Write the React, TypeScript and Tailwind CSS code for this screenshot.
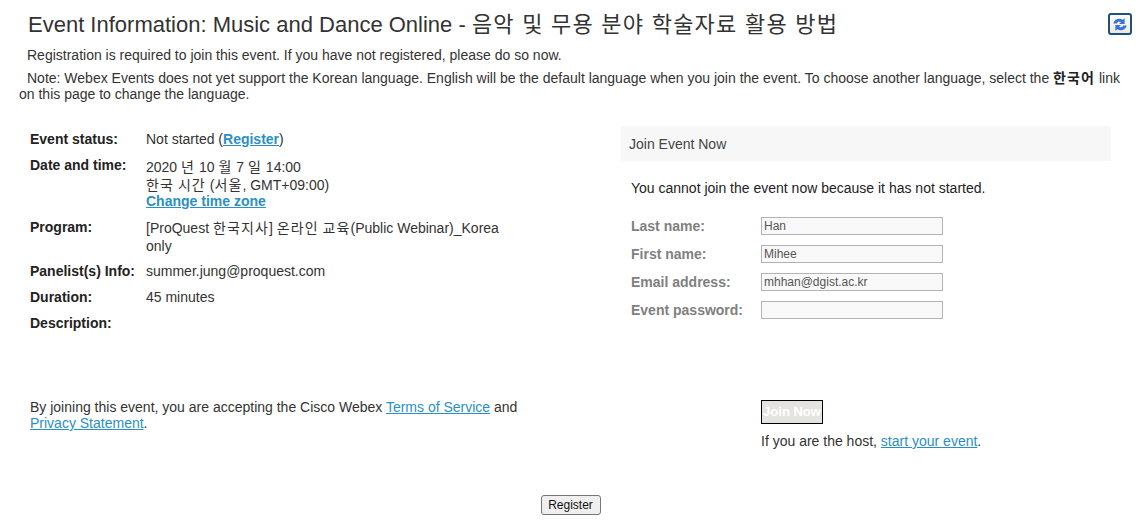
const font = "[font-family:'Liberation_Sans','Noto_Sans_CJK_KR',sans-serif]";

// Korean glyphs run wider in the reference than Noto does, so words get a bit of tracking
function Ko({ children }: { children: string }) {
  return <span className="tracking-[0.079em]">{children}</span>;
}

const linkClass = "text-[#2a90c4] underline";

const eventRows = [
  { label: "Event status:", content: <>Not started (<a href="#" className={`font-bold ${linkClass}`}>Register</a>)</> },
  {
    label: "Date and time:",
    content: (
      <div className="pt-0.5">
        <div>2020 <Ko>년</Ko> 10 <Ko>월</Ko> 7 <Ko>일</Ko> 14:00</div>
        <div className="mt-[2px]"><Ko>한국</Ko> <Ko>시간</Ko> (<Ko>서울</Ko>, GMT+09:00)</div>
        <a href="#" className={`block font-bold ${linkClass}`}>Change time zone</a>
      </div>
    ),
  },
  {
    label: "Program:",
    content: (
      <div className="-mb-[2px] leading-[18px]">
        [ProQuest <Ko>한국지사</Ko>] <Ko>온라인</Ko> <Ko>교육</Ko>(Public Webinar)_Korea only
      </div>
    ),
  },
  { label: "Panelist(s) Info:", content: "summer.jung@proquest.com" },
  { label: "Duration:", content: "45 minutes" },
  { label: "Description:", content: "" },
];

const joinFields = [
  { label: "Last name:", value: "Han" },
  { label: "First name:", value: "Mihee" },
  { label: "Email address:", value: "mhhan@dgist.ac.kr" },
  { label: "Event password:", value: "" },
];

function RefreshIcon() {
  return (
    <div className="mt-px flex h-[22px] w-[24px] items-center justify-center rounded-[3px] border-2 border-[#23507a] bg-gradient-to-b from-white to-[#eceade]">
      <svg width="16" height="15" viewBox="0 0 18 16" fill="#3a72e0">
        <path d="M1.5 7C2.2 2.6 7.6 0 11.8 2.6L14.2 1v6.4H8l2-1.9C8.2 4.5 5.8 5.2 5.4 7z" />
        <path d="M16.5 9c-.7 4.4-6.1 7-10.3 4.4L3.8 15V8.6H10l-2 1.9c1.8 1 4.2.3 4.6-1.5z" />
      </svg>
    </div>
  );
}

export default function App() {
  return (
    <div className={`${font} h-[532px] w-[1146px] overflow-hidden bg-white text-[14px] leading-[16px] text-[#333]`}>
      <header className="flex items-start justify-between pl-[28px] pr-[14px] pt-[12px]">
        <h1 className="text-[22px] leading-[26px] font-normal text-[#333]">
          Event Information: Music and Dance Online - <span className="tracking-[1.24px]">음악 및 무용 분야 학술자료 활용 방법</span>
        </h1>
        <RefreshIcon />
      </header>

      <p className="mt-[9px] pl-[27px]">Registration is required to join this event. If you have not registered, please do so now.</p>
      <p className="mt-[7px] w-[1130px] pl-[19px] indent-[8px]">
        Note: Webex Events does not yet support the Korean language. English will be the default language when you join the event. To choose another language, select the <b className="text-[#222]"><Ko>한국어</Ko></b> link on this page to change the language.
      </p>

      <main className="mt-[24px] flex">
        <section className="w-[621px] pl-[30px]">
          <div className="flex flex-col gap-[10px] pt-[5px]">
            {eventRows.map((row) => (
              <div key={row.label} className="flex">
                <div className="w-[116px] shrink-0 font-bold text-[#222]">{row.label}</div>
                <div className="w-[360px]">{row.content}</div>
              </div>
            ))}
          </div>
          <p className="mt-[68px] w-[500px]">
            By joining this event, you are accepting the Cisco Webex <a href="#" className={linkClass}>Terms of Service</a> and <a href="#" className={linkClass}>Privacy Statement</a>.
          </p>
        </section>

        <section className="w-[490px]">
          <div className="flex h-[35px] items-center bg-[#f7f7f7] pl-[8px] text-[#444]">Join Event Now</div>
          <div className="pl-[10px]">
            <p className="mt-[19px] text-[#222]">You cannot join the event now because it has not started.</p>
            <div className="mt-[21px] flex flex-col gap-[10px]">
              {joinFields.map((field) => (
                <div key={field.label} className="flex items-center">
                  <label className="w-[130px] font-bold text-[#808080]">{field.label}</label>
                  <div className="h-[18px] w-[182px] border border-[#b4b4b4] bg-[#f9f9f9] pl-[2px] text-[12px] leading-[17px] text-[#555]">{field.value}</div>
                </div>
              ))}
            </div>
            <div className="mt-[81px] pl-[130px]">
              <button className="block h-[24px] w-[62px] whitespace-nowrap border border-black bg-[#e4e3df] p-0 text-[13px] font-bold text-white">Join Now</button>
              <p className="mt-[9px]">If you are the host, <a href="#" className={linkClass}>start your event</a>.</p>
            </div>
          </div>
        </section>
      </main>

      <div className="mt-[46px] flex justify-center pr-[5px]">
        <button className="h-[20px] w-[60px] rounded-[3px] border border-[#767676] bg-[#efefef] text-[12px] text-[#111]">Register</button>
      </div>
    </div>
  );
}
